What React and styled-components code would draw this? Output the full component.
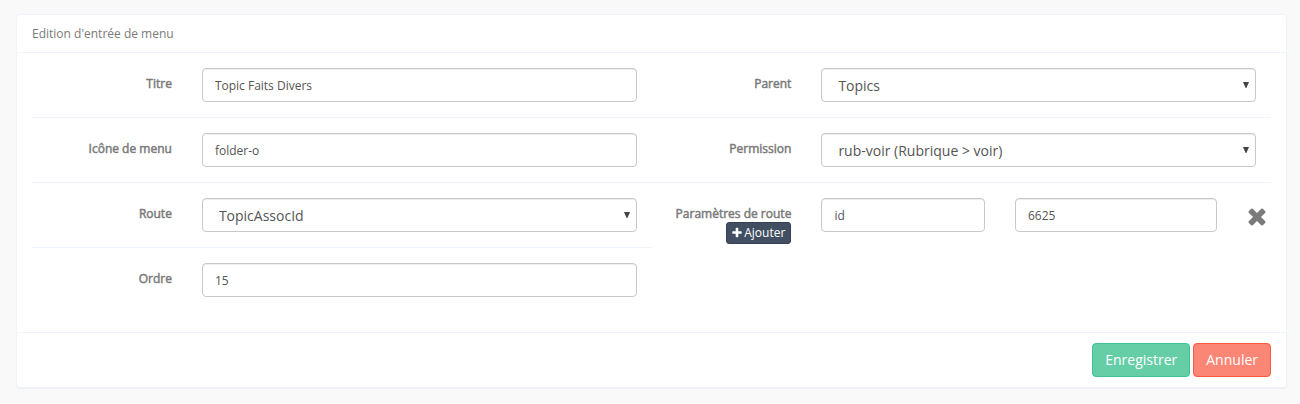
import React from "react";
import styled, { createGlobalStyle, css } from "styled-components";

const GlobalStyle = createGlobalStyle`
  *, *::before, *::after { box-sizing: border-box; }
  html { min-height: 100%; background: #f9f9f9; }
  body {
    margin: 0;
    font: 12px/17px "Open Sans", "Liberation Sans", sans-serif;
    color: #7a7a7a;
  }
`;

const Page = styled.main`
  padding: 14px 13px 14px 16px;
`;

const Panel = styled.form`
  background: #fff;
  border: 1px solid #eff4fb;
  border-radius: 4px;
  box-shadow: 0 1px 1px rgba(0, 0, 0, 0.05);
`;

const PanelHeading = styled.header`
  padding: 10px 15px;
  border-bottom: 1px solid #eff4fb;
`;

const PanelTitle = styled.h1`
  margin: 0;
  font-size: 12px;
  font-weight: 400;
`;

const PanelBody = styled.div`
  display: grid;
  grid-template-columns: 1fr 1fr;
  align-items: start;
  padding: 0 15px 20px;
`;

const Row = styled.div`
  display: grid;
  grid-template-columns: 3fr 9fr;
  align-items: start;
  padding: 15px 0;
  border-bottom: 1px solid #eff4fb;

  &:last-child {
    border-bottom: 0;
  }
`;

const LabelCell = styled.div`
  display: flex;
  flex-direction: column;
  align-items: flex-end;
  padding: 7px 15px 0 0;
`;

const Label = styled.label`
  white-space: nowrap;
  -webkit-text-stroke: 0.04em currentColor;
`;

const Cell = styled.div`
  min-width: 0;
  padding: 0 15px;
`;

const Params = styled.div`
  display: grid;
  grid-template-columns: 5fr 6fr 1fr;
`;

const control = css`
  display: block;
  width: 100%;
  height: 34px;
  border: 1px solid #c8c8c8;
  border-radius: 4px;
  background: #fff;
  box-shadow: inset 0 1px 1px rgba(0, 0, 0, 0.075);
  color: #555;
  font-family: inherit;
`;

const Input = styled.input`
  ${control}
  padding: 6px 12px;
  font-size: 12px;
`;

const SelectBox = styled.div`
  position: relative;
`;

const SelectControl = styled.select`
  ${control}
  appearance: none;
  padding: 7px 24px 5px 16px;
  font-size: 14px;
  line-height: 20px;
`;

const Arrow = styled.svg`
  position: absolute;
  top: 14px;
  right: 7px;
  pointer-events: none;
`;

const buttonTones = {
  dark: ["#424f63", "#374152"],
  success: ["#65cea7", "#3ec291"],
  danger: ["#fc8675", "#fb5a43"],
};

const Button = styled.button`
  display: inline-flex;
  align-items: center;
  justify-content: center;
  padding: ${(p) => (p.$small ? "1px 5px" : "6px 12px")};
  border: 1px solid ${(p) => buttonTones[p.$tone][1]};
  border-radius: ${(p) => (p.$small ? "3px" : "4px")};
  background: ${(p) => buttonTones[p.$tone][0]};
  color: #fff;
  font-family: inherit;
  font-size: ${(p) => (p.$small ? "12px" : "14px")};
  line-height: ${(p) => (p.$small ? "18px" : "20px")};
  white-space: nowrap;
  gap: 2px;
  cursor: pointer;
`;

const RemoveButton = styled.button`
  display: flex;
  justify-self: end;
  margin-top: 7px;
  padding: 0 4px 0 0;
  border: 0;
  background: none;
  color: #7a7a7a;
  cursor: pointer;
`;

const PanelFooter = styled.footer`
  display: flex;
  justify-content: flex-end;
  gap: 3px;
  padding: 10px 15px;
  border-top: 1px solid #eff4fb;
`;

function PlusIcon() {
  return (
    <svg width="10" height="12" viewBox="192 0 1408 1792" fill="currentColor" aria-hidden="true">
      <path d="M1600 736v192q0 40-28 68t-68 28h-416v416q0 40-28 68t-68 28h-192q-40 0-68-28t-28-68v-416h-416q-40 0-68-28t-28-68v-192q0-40 28-68t68-28h416v-416q0-40 28-68t68-28h192q40 0 68 28t28 68v416h416q40 0 68 28t28 68z" />
    </svg>
  );
}

function TimesIcon() {
  return (
    <svg width="20" height="25" viewBox="0 100 1408 1792" fill="currentColor" stroke="currentColor" strokeWidth="24" aria-hidden="true">
      <path d="M1298 1322q0 40-28 68l-136 136q-28 28-68 28t-68-28l-294-294-294 294q-28 28-68 28t-68-28l-136-136q-28-28-28-68t28-68l294-294-294-294q-28-28-28-68t28-68l136-136q28-28 68-28t68 28l294 294 294-294q28-28 68-28t68 28l136 136q28 28 28 68t-28 68l-294 294 294 294q28 28 28 68z" />
    </svg>
  );
}

function TextField({ id, label, value }) {
  return (
    <Row>
      <LabelCell>
        <Label htmlFor={id}>{label}</Label>
      </LabelCell>
      <Cell>
        <Input id={id} type="text" defaultValue={value} />
      </Cell>
    </Row>
  );
}

function SelectField({ id, label, value }) {
  return (
    <Row>
      <LabelCell>
        <Label htmlFor={id}>{label}</Label>
      </LabelCell>
      <Cell>
        <SelectBox>
          <SelectControl id={id} defaultValue={value}>
            <option>{value}</option>
          </SelectControl>
          <Arrow width="6" height="6" viewBox="0 0 6 6" aria-hidden="true">
            <path d="M0 0h6L3.4 6h-.8z" fill="#444" />
          </Arrow>
        </SelectBox>
      </Cell>
    </Row>
  );
}

export default function App() {
  return (
    <>
      <GlobalStyle />
      <Page>
        <Panel onSubmit={(e) => e.preventDefault()}>
          <PanelHeading>
            <PanelTitle>Edition d'entrée de menu</PanelTitle>
          </PanelHeading>
          <PanelBody>
            <div>
              <TextField id="title" label="Titre" value="Topic Faits Divers" />
              <TextField id="icon" label="Icône de menu" value="folder-o" />
              <SelectField id="route" label="Route" value="TopicAssocId" />
              <TextField id="order" label="Ordre" value="15" />
            </div>
            <div>
              <SelectField id="parent" label="Parent" value="Topics" />
              <SelectField id="permission" label="Permission" value="rub-voir (Rubrique > voir)" />
              <Row>
                <LabelCell>
                  <Label id="params-label" htmlFor="param-name">Paramètres de route</Label>
                  <Button type="button" $tone="dark" $small>
                    <PlusIcon />
                    Ajouter
                  </Button>
                </LabelCell>
                <Params>
                  <Cell>
                    <Input id="param-name" type="text" defaultValue="id" />
                  </Cell>
                  <Cell>
                    <Input type="text" aria-labelledby="params-label" defaultValue="6625" />
                  </Cell>
                  <RemoveButton type="button" aria-label="Supprimer">
                    <TimesIcon />
                  </RemoveButton>
                </Params>
              </Row>
            </div>
          </PanelBody>
          <PanelFooter>
            <Button type="submit" $tone="success">Enregistrer</Button>
            <Button type="button" $tone="danger">Annuler</Button>
          </PanelFooter>
        </Panel>
      </Page>
    </>
  );
}
